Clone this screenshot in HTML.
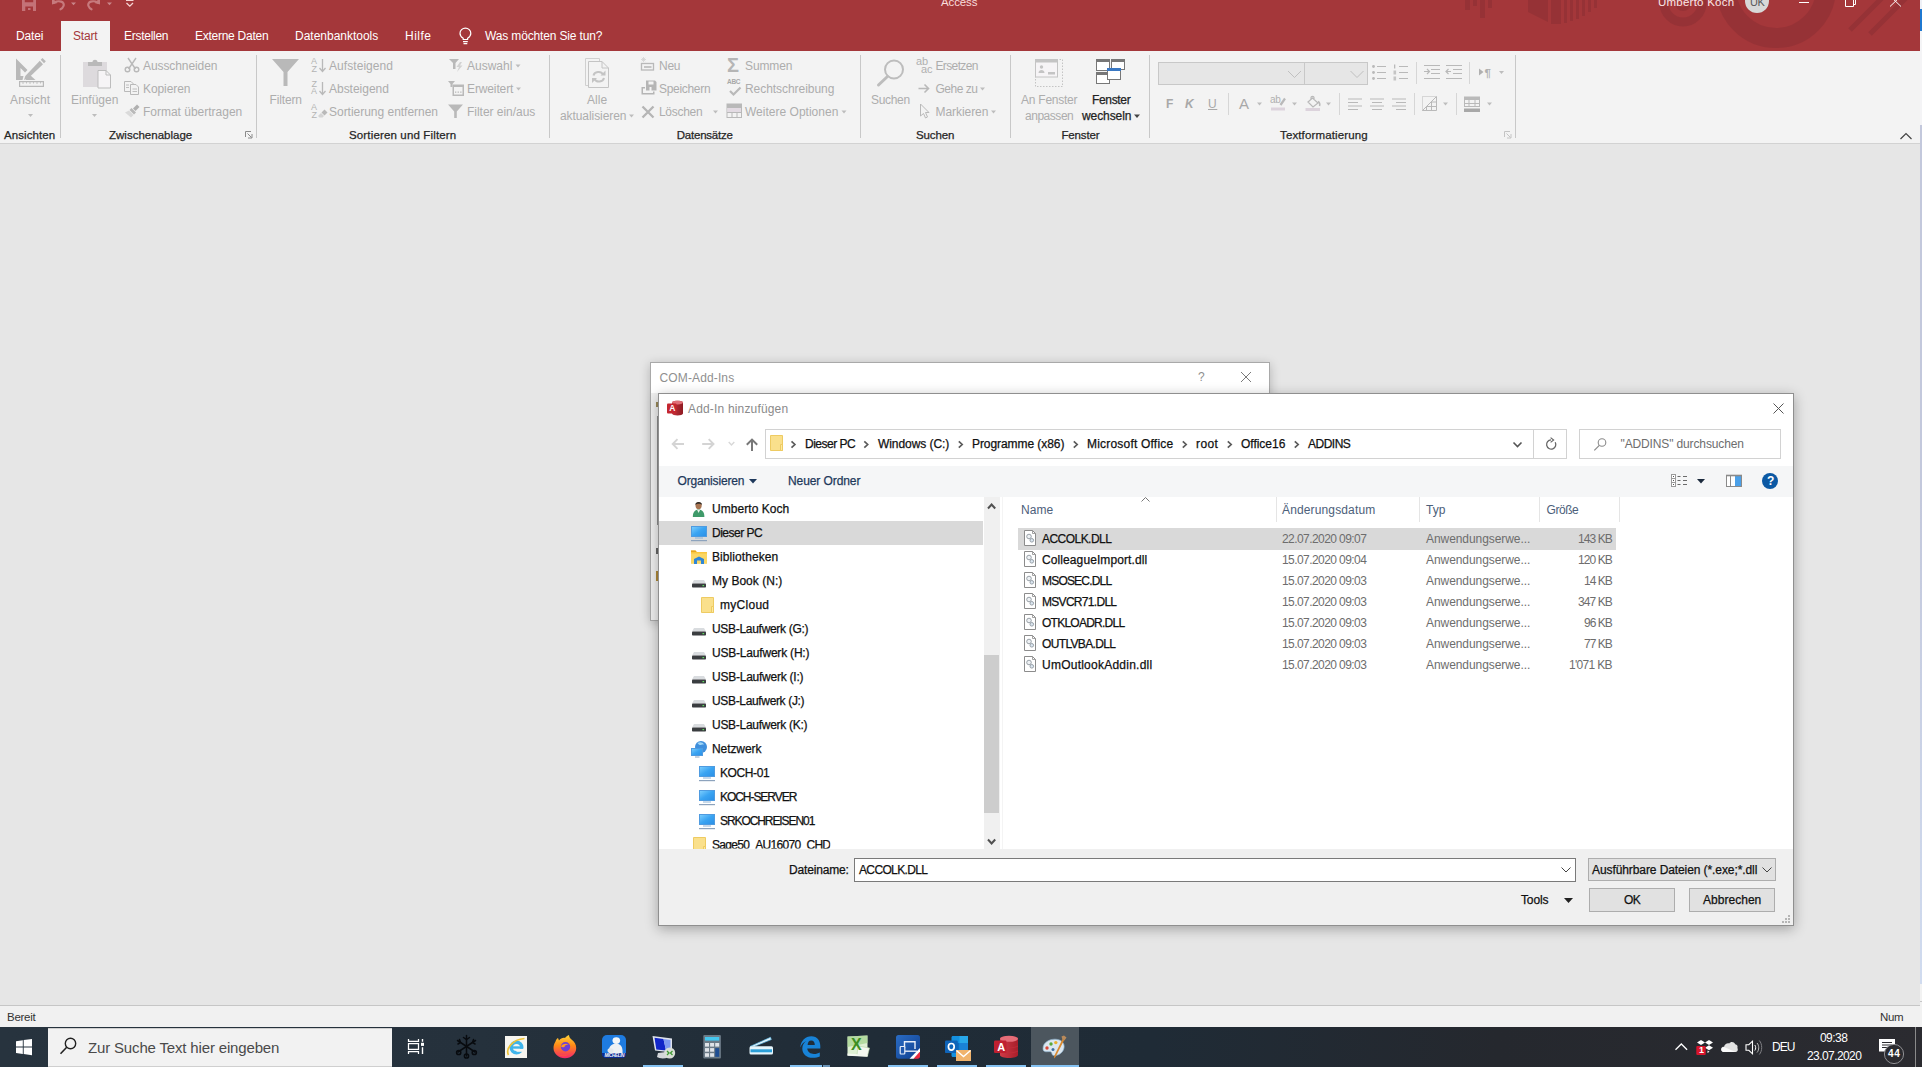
<!DOCTYPE html>
<html lang="de">
<head>
<meta charset="utf-8">
<title>Access</title>
<style>
html,body{margin:0;padding:0;}
body{width:1922px;height:1067px;overflow:hidden;position:relative;background:#e6e6e6;font-family:"Liberation Sans",sans-serif;}
.t{position:absolute;white-space:nowrap;font-family:"Liberation Sans",sans-serif;}
.a{position:absolute;}
.b{-webkit-text-stroke:0.25px currentColor;}
svg{position:absolute;overflow:visible;}
</style>
</head>
<body>

<!-- application frame -->
<div class="a" style="left:0;top:0;width:1920px;height:51px;background:#a4373a;"></div>
<div class="a" style="left:61px;top:21px;width:49px;height:31px;background:#f3f3f3;"></div>
<div class="a" style="left:0;top:51px;width:1920px;height:92px;background:#f3f3f3;"></div>
<div class="a" style="left:0;top:143px;width:1920px;height:1px;background:#d2d2d2;"></div>
<div class="a" style="left:0;top:1005px;width:1920px;height:1px;background:#c6c6c6;"></div>
<div class="a" style="left:0;top:1006px;width:1920px;height:21px;background:#f1f1f1;"></div>
<!-- right strip -->
<div class="a" style="left:1920px;top:0;width:2px;height:1027px;background:linear-gradient(180deg,#c3c8dc 0px,#c3c8dc 500px,#d0dbef 984px,#f2f2f2 984px);"></div>
<div class="a" style="left:1920px;top:0;width:2px;height:9px;background:#eef0f6;"></div>
<div class="a" style="left:1920px;top:9px;width:2px;height:22px;background:#1f78d1;"></div>
<div class="a" style="left:1920px;top:31px;width:2px;height:94px;background:#f4f4f6;"></div>
<div class="a" style="left:1920px;top:1001px;width:2px;height:1px;background:#c6c6c6;"></div>

<!-- ribbon icons -->
<svg style="left:0;top:0" width="1922" height="144" viewBox="0 0 1922 144">
<!-- title decoration -->
<g fill="#8e3035" opacity=".6">
<rect x="1465" y="0" width="5" height="10"/><rect x="1473" y="0" width="4" height="6"/><rect x="1480" y="0" width="5" height="18"/><rect x="1488" y="0" width="4" height="8"/>
<path d="M1528 0H1548V22L1528 12Z"/><rect x="1551" y="0" width="10" height="24"/><rect x="1564" y="0" width="3" height="23"/><rect x="1570" y="0" width="3" height="21"/><rect x="1576" y="0" width="3" height="19"/><rect x="1582" y="0" width="3" height="16"/><rect x="1588" y="0" width="3" height="12"/><rect x="1594" y="0" width="3" height="8"/>
</g>
<g fill="none" stroke="#8e3035" opacity=".6">
<circle cx="1683" cy="3" r="19" stroke-width="9"/><circle cx="1683" cy="3" r="6" stroke-width="4"/>
<circle cx="1776" cy="-12" r="50" stroke-width="20"/>
<path d="M1850 30L1890 -10M1870 34L1912 -8" stroke-width="5"/>
</g>
<!-- QAT -->
<path d="M22 -3H36V11H22ZM25.300 6.500V11H33V6.500ZM24.800 -3V2.200H33.200V-3Z" fill="#c47277" fill-rule="evenodd"/><rect x="28" y="8" width="2.500" height="2" fill="#c47277"/>
<g fill="none" stroke="#c77a7d" stroke-width="2.200" stroke-linecap="round"><path d="M54 2.500C59 0 65 1.500 63.500 6C62.800 8 61.500 8.800 60.500 9.300"/><path d="M98 2.500C93 0 87 1.500 88.500 6C89.200 8 90.500 8.800 91.500 9.300"/></g>
<path d="M52 -2V4.500L57.500 3Z M100 -2V4.500L94.500 3Z" fill="#c77a7d"/>
<path d="M71 2.500H76L73.500 5.200Z M107 2.500H112L109.500 5.200Z" fill="#c98689"/>
<path d="M126 0H133.500" stroke="#f6d3d3" stroke-width="2"/><path d="M126.500 3L129.800 6.200L133 3" fill="none" stroke="#f6d3d3" stroke-width="1.300"/>
<!-- user avatar -->
<circle cx="1757" cy="1" r="12" fill="#d8d8d8"/>
<!-- window controls -->
<g fill="none" stroke="#fff" stroke-width="1"><path d="M1799 2.500H1809"/><path d="M1845.500 -1V6.500H1853.500V-1M1855.500 -1V4.500H1853.500"/><path d="M1890 -4L1901 6.500M1901 -4L1890 6.500"/></g>
<!-- bulb -->
<g fill="none" stroke="#fff" stroke-width="1.200"><path d="M463.200 39.500V38.300C460.700 36.800 460 34.800 460 33.300C460 30.400 462.400 28.200 465.400 28.200C468.400 28.200 470.800 30.400 470.800 33.300C470.800 34.800 470.100 36.800 467.600 38.300V39.500Z"/><path d="M463 41.600H467.800M463.500 43.600H467.300"/></g>
<!-- group separators -->
<g fill="#c8c8c8"><rect x="60" y="55" width="1" height="83"/><rect x="256" y="55" width="1" height="83"/><rect x="549" y="55" width="1" height="83"/><rect x="860" y="55" width="1" height="83"/><rect x="1010" y="55" width="1" height="83"/><rect x="1149" y="55" width="1" height="83"/><rect x="1515" y="55" width="1" height="83"/></g>
<g fill="#d6d6d6"><rect x="1416" y="62" width="1" height="22"/><rect x="1469" y="62" width="1" height="22"/><rect x="1228" y="93" width="1" height="22"/><rect x="1339" y="93" width="1" height="22"/><rect x="1414" y="93" width="1" height="22"/><rect x="1456" y="93" width="1" height="22"/></g>
<!-- dropdown arrows -->
<g fill="#bdbdbd">
<path d="M28 114H33L30.500 117Z"/><path d="M92 114H97L94.500 117Z"/>
<path d="M515.500 64.500H520.500L518 67.500Z"/><path d="M516 87.500H521L518.500 90.500Z"/>
<path d="M629 114.500H634L631.500 117.500Z"/><path d="M713 110.500H718L715.500 113.500Z"/><path d="M841.500 110.500H846.500L844 113.500Z"/>
<path d="M980 87.500H985L982.500 90.500Z"/><path d="M991 110.500H996L993.500 113.500Z"/>
<path d="M1499 71H1504L1501.500 74Z"/><path d="M1257 102.500H1262L1259.500 105.500Z"/><path d="M1292 102.500H1297L1294.500 105.500Z"/><path d="M1326 102.500H1331L1328.500 105.500Z"/><path d="M1443 102.500H1448L1445.500 105.500Z"/><path d="M1487 102.500H1492L1489.500 105.500Z"/>
</g>
<path d="M1134 114.500H1140L1137 118Z" fill="#444"/>
<!-- dialog launchers -->
<g fill="none" stroke="#8a8a8a" stroke-width="1"><path d="M245.500 137V131.500H251M247.500 133.500L251.500 137.500M252 134V138H248"/><path d="M1504.500 137V131.500H1510M1506.500 133.500L1510.500 137.500M1511 134V138H1507" stroke="#c4c4c4"/></g>
<!-- collapse ribbon -->
<path d="M1900.500 139L1906 133.500L1911.500 139" fill="none" stroke="#444" stroke-width="1.200"/>
<!-- Ansicht icon -->
<g fill="#b9b9b9"><path d="M16 58.500L27.500 70L25 72.500L20.500 68V76H23.500L22.500 80H16Z"/><path d="M30 75L35.500 80H25.500Z"/><path d="M42.500 58L45.800 61.300L44 63.200L40.700 59.800Z"/><path d="M39.800 60.800L43 64.200L28 78.500L24 80L25.300 76Z"/><path d="M19 81H44V87H19ZM20.200 82.200V85.800H42.800V82.200Z" fill-rule="evenodd"/><path d="M23 82V84M26.500 82V83.500M30 82V84M33.500 82V83.500M37 82V84M40.500 82V83.500" stroke="#b9b9b9" stroke-width=".8"/></g>
<!-- Einfügen icon -->
<rect x="83" y="62" width="24" height="25" fill="#dddadd"/><path d="M88 66V62H92.500C92.500 59 97.500 59 97.500 62H102V66Z" fill="#b9b9b9"/><path d="M98 70.500H106L110.500 75V88H98Z" fill="#f6f4f6" stroke="#bdbdbd" stroke-width="1"/><path d="M106 70.500V75H110.500" fill="none" stroke="#bdbdbd"/>
<!-- scissors, copy, brush -->
<g fill="none" stroke="#b9b9b9" stroke-width="1.400"><path d="M128 58L135.500 69M136 58L128.500 69"/><circle cx="127.500" cy="69.500" r="2.300"/><circle cx="136.500" cy="69.500" r="2.300"/></g>
<g fill="#f3f3f3" stroke="#b9b9b9" stroke-width="1"><path d="M124.500 81.500H131L133.500 84V91.500H124.500Z"/><path d="M130.500 84.500H136L138.500 87V94.500H130.500Z"/></g><path d="M126 85H129M126 87.500H129M132.500 89H137M132.500 91.500H137" stroke="#b9b9b9" stroke-width=".9"/>
<path d="M137 104.500L139.500 107L135.500 111L133 108.500Z" fill="#b0b0b0"/><path d="M131.500 108L136 112.500L134 114.500L129.500 110Z" fill="#b9b9b9"/><path d="M129 110.500L133.500 115L131 117.500L125 112.500Z" fill="#dadada"/>
<!-- Filter big -->
<path d="M272 59H299L287.500 72V86H283.500V72Z" fill="#b9b9b9"/>
<!-- sort icons -->
<g fill="none" stroke="#b9b9b9" stroke-width="1.300"><path d="M322.500 59V71M319.500 68L322.500 71.500L325.500 68"/><path d="M322.500 82V94M319.500 91L322.500 94.500L325.500 91"/></g>
<g fill="#b9b9b9"><path d="M321.500 112.500L324.500 109.500L327.500 112.500L324.500 115.500Z"/><path d="M318 116L321 113L324 116L322.500 117.500H319.500Z" opacity=".55"/></g>
<!-- small filters -->
<g fill="#b9b9b9"><path d="M449 59H459L455.500 63V69H453V63Z"/><path d="M460 62L456.500 67H459L457 72L462.500 65.500H460L462 62Z" fill="#d2d2d2"/>
<path d="M448 81H455L452.500 84V87H450.500V84Z"/><path d="M452.500 84.500H464V96H452.500ZM454 87V94.500H462.500V87Z" fill-rule="evenodd"/><rect x="455" y="91.500" width="1.300" height="1.300"/><rect x="457.600" y="91.500" width="1.300" height="1.300"/><rect x="460.200" y="91.500" width="1.300" height="1.300"/>
<path d="M448 104.500H463L456.800 111.500V118H454.200V111.500Z"/></g>
<!-- refresh all -->
<g fill="#f3f3f3" stroke="#c4c4c4" stroke-width="1"><path d="M585.500 58.500H599.500V85.500H585.500Z" stroke="#d0d0d0"/><path d="M588.500 61.500H602L608.500 68V87.500H588.500Z"/><path d="M602 61.500V68H608.500" fill="none"/></g>
<g fill="none" stroke="#c4c4c4" stroke-width="2"><path d="M593.500 75.500C594.500 71.500 601 70.500 603 74.500"/><path d="M604 78C603 82 596.500 83 594.500 79"/></g><path d="M600.500 75.500H605.500V70.500Z M597 78H592V83Z" fill="#c4c4c4"/>
<!-- Neu / Speichern / Löschen -->
<g fill="none" stroke="#b9b9b9" stroke-width="1.300"><rect x="641.500" y="63.500" width="12" height="6.500"/><path d="M644 67H651.500" stroke-width="1.600"/></g><path d="M643.500 57V62M641 59.500H646M641.800 57.800L645.200 61.200M645.200 57.800L641.800 61.200" stroke="#d2d2d2" stroke-width=".8"/>
<g fill="#b5b5b5"><path d="M646 80.500H655L656.500 82V90.500H646ZM648.500 81.500V84.500H653.500V81.500ZM649.500 87V90.500H651.500V87Z" fill-rule="evenodd"/><path d="M641.500 87H645V88.500H643V93H653V91.500H654.500V94.500H641.500Z"/></g>
<path d="M642.500 106.500L653.500 117.500M653.500 106.500L642.500 117.500" stroke="#b5b5b5" stroke-width="2.300" fill="none"/>
<!-- Summen / Rechtschreibung / Weitere -->

<path d="M730 91L733.500 94.500L740.500 87.500" fill="none" stroke="#b9b9b9" stroke-width="2.200"/>
<g fill="none" stroke="#b9b9b9" stroke-width="1"><rect x="727" y="104" width="14.500" height="13.500"/><path d="M727 107.500H741.500M727 112.500H741.500M732 107.500V117.500M737 107.500V117.500"/></g><rect x="727" y="104" width="14.500" height="3.500" fill="#b9b9b9"/><rect x="727.500" y="108" width="13.500" height="4" fill="#e3dbe3"/>
<!-- Suchen big -->
<circle cx="894" cy="69.500" r="9" fill="none" stroke="#bdbdbd" stroke-width="2"/><path d="M887.500 76.500L878.500 85" stroke="#bdbdbd" stroke-width="3" stroke-linecap="round"/>
<!-- gehe zu arrow, cursor -->
<path d="M918.500 88.500H928M924.500 84.500L928.500 88.500L924.500 92.500" fill="none" stroke="#b9b9b9" stroke-width="1.600"/>
<path d="M920.500 104V116L923.500 113.500L925.500 118L927.500 117L925.500 112.500H929Z" fill="#f3f3f3" stroke="#b9b9b9" stroke-width="1"/>
<!-- An Fenster anpassen -->
<rect x="1035.500" y="59.500" width="27" height="27" fill="none" stroke="#c4c4c4" stroke-width="1" stroke-dasharray="1.500 1.500"/><rect x="1035.500" y="59.500" width="22" height="17.500" fill="#f6f4f6" stroke="#c4c4c4"/><rect x="1035.500" y="59.500" width="22" height="3" fill="#c4c4c4"/><circle cx="1041.500" cy="67" r="1.700" fill="#c4c4c4"/><path d="M1038.500 73C1038.500 69 1044.500 69 1044.500 73Z" fill="#c4c4c4"/><rect x="1048" y="72" width="7" height="2.500" fill="#c4c4c4"/>
<!-- Fenster wechseln -->
<g fill="#fff" stroke="#777" stroke-width="1"><rect x="1096.500" y="59.500" width="13" height="11"/><rect x="1111.500" y="59.500" width="13" height="10"/><rect x="1096.500" y="72.500" width="13" height="11"/></g><g fill="#777"><rect x="1096" y="59" width="14" height="3"/><rect x="1111" y="59" width="14" height="3"/><rect x="1096" y="72" width="14" height="3"/></g><rect x="1107.500" y="68.500" width="13" height="11" fill="#fff" stroke="#777"/><rect x="1107" y="68" width="14" height="3" fill="#3a78c3"/>
<!-- font combos -->
<rect x="1158.500" y="62.500" width="146" height="22" fill="#e6e6e6" stroke="#c8c8c8"/><rect x="1304.500" y="62.500" width="63" height="22" fill="#e6e6e6" stroke="#c8c8c8"/>
<path d="M1288 71L1294.500 77.500L1301 71M1350.500 71L1357 77.500L1363.500 71" fill="none" stroke="#c0c0c0" stroke-width="1"/>
<!-- list icons -->
<g fill="#b9b9b9"><circle cx="1373.500" cy="66.500" r="1.400"/><circle cx="1373.500" cy="72.500" r="1.400"/><circle cx="1373.500" cy="78.500" r="1.400"/><rect x="1377" y="66" width="9" height="1"/><rect x="1377" y="72" width="9" height="1"/><rect x="1377" y="78" width="9" height="1"/>
<rect x="1399" y="66" width="9" height="1"/><rect x="1399" y="72" width="9" height="1"/><rect x="1399" y="78" width="9" height="1"/><rect x="1394" y="64.500" width="1.300" height="4"/><rect x="1393.500" y="70.500" width="2.600" height="4" opacity=".8"/><rect x="1393.500" y="76.500" width="2.600" height="4" opacity=".8"/>
<rect x="1424" y="65" width="16" height="1"/><rect x="1431" y="69" width="9" height="1"/><rect x="1431" y="73" width="9" height="1"/><rect x="1424" y="78" width="16" height="1"/><rect x="1446" y="65" width="16" height="1"/><rect x="1453" y="69" width="9" height="1"/><rect x="1453" y="73" width="9" height="1"/><rect x="1446" y="78" width="16" height="1"/></g>
<path d="M1424 71.500H1429M1427 69L1429.500 71.500L1427 74M1451 71.500H1446.500M1448.500 69L1446 71.500L1448.500 74" fill="none" stroke="#b9b9b9" stroke-width="1.200"/>
<path d="M1479 68.500L1483.500 72L1479 75.500Z" fill="#b0b0b0"/>
<!-- row 2 -->
<path d="M1271 109H1285" stroke="#dcd3dc" stroke-width="3"/><path d="M1280.500 105L1285 98.500" stroke="#b9b9b9" stroke-width="2.200"/>
<path d="M1305.500 109.500H1320" stroke="#dcd3dc" stroke-width="3"/><path d="M1308 102L1312.500 98L1318 103L1313 107ZM1311 99V97.500C1311 96 1314 96 1314 97.500V99.500" fill="none" stroke="#b9b9b9" stroke-width="1.200"/><path d="M1318 101.500C1320 102.500 1320 105 1319.500 106" fill="none" stroke="#b9b9b9" stroke-width="1.600"/>
<g fill="#b9b9b9"><rect x="1348" y="98.500" width="14" height="1"/><rect x="1348" y="102" width="10" height="1"/><rect x="1348" y="105.500" width="14" height="1"/><rect x="1348" y="109" width="10" height="1"/>
<rect x="1370" y="98.500" width="14" height="1"/><rect x="1372" y="102" width="10" height="1"/><rect x="1370" y="105.500" width="14" height="1"/><rect x="1372" y="109" width="10" height="1"/>
<rect x="1392" y="98.500" width="14" height="1"/><rect x="1396" y="102" width="10" height="1"/><rect x="1392" y="105.500" width="14" height="1"/><rect x="1396" y="109" width="10" height="1"/></g>
<g fill="none" stroke="#b9b9b9" stroke-width="1"><path d="M1422.500 110.500V96.500H1436.500" stroke-dasharray="1 1"/><path d="M1422.500 110.500L1436.500 96.500V110.500ZM1426.500 110.500V106.500H1436.500M1431.500 110.500V102H1436.500"/></g>
<g fill="#b9b9b9"><path d="M1464 96.500H1480V107H1464ZM1465 100V103H1468.500V100ZM1469.500 100V103H1474.500V100ZM1475.500 100V103H1479V100ZM1465 104V106H1468.500V104ZM1469.500 104V106H1474.500V104ZM1475.500 104V106H1479V104Z" fill-rule="evenodd"/><rect x="1464" y="108.500" width="16" height="3.500" fill="#a8a8a8"/></g>
</svg>

<!-- COM-Add-Ins dialog (behind) -->
<div class="a" style="left:650px;top:362px;width:620px;height:259px;background:#f0f0f0;border:1px solid #a9a9a9;box-sizing:border-box;box-shadow:0 2px 10px rgba(0,0,0,.22);"></div>
<div class="a" style="left:651px;top:363px;width:618px;height:30px;background:#ffffff;"></div>
<svg style="left:1241px;top:372px" width="10" height="10" viewBox="0 0 10 10"><path d="M0 0L10 10M10 0L0 10" stroke="#7a7a7a" stroke-width="1" fill="none"/></svg>
<!-- bits of COM dialog visible left of file dialog -->
<div class="a" style="left:657px;top:416px;width:1px;height:109px;background:#8f8f8f;"></div>
<div class="a" style="left:656px;top:402px;width:2px;height:5px;background:#9a8a5a;"></div>
<div class="a" style="left:656px;top:548px;width:2px;height:6px;background:#666;"></div>
<div class="a" style="left:656px;top:571px;width:2px;height:10px;background:#b08a3a;"></div>
<!-- File dialog -->
<div class="a" style="left:658px;top:393px;width:1136px;height:533px;background:#ffffff;border:1px solid #8f8f8f;box-sizing:border-box;box-shadow:0 3px 12px rgba(0,0,0,.30);"></div>
<!-- close X -->
<svg style="left:1773px;top:403px" width="11" height="11" viewBox="0 0 11 11"><path d="M0.5 0.5L10.5 10.5M10.5 0.5L0.5 10.5" stroke="#555" stroke-width="1" fill="none"/></svg>
<!-- address box -->
<div class="a" style="left:765px;top:429px;width:802px;height:30px;border:1px solid #d2d2d2;box-sizing:border-box;background:#fff;"></div>
<div class="a" style="left:1533px;top:430px;width:1px;height:28px;background:#d2d2d2;"></div>
<div class="a" style="left:1579px;top:429px;width:202px;height:30px;border:1px solid #d2d2d2;box-sizing:border-box;background:#fff;"></div>
<!-- toolbar band -->
<div class="a" style="left:659px;top:466px;width:1134px;height:31px;background:#f5f6f7;"></div>
<!-- nav pane selected row -->
<div class="a" style="left:659px;top:521px;width:324px;height:24px;background:#d9d9d9;"></div>
<!-- nav scrollbar -->
<div class="a" style="left:984px;top:497px;width:16px;height:352px;background:#f0f0f0;"></div>
<div class="a" style="left:984px;top:655px;width:15px;height:158px;background:#cdcdcd;"></div>
<svg style="left:986px;top:502px" width="11" height="8" viewBox="0 0 11 8"><path d="M2 6.500L5.600 2.500L9.200 6.500" stroke="#505050" stroke-width="2" fill="none"/></svg>
<svg style="left:986px;top:838px" width="11" height="8" viewBox="0 0 11 8"><path d="M2 1.500L5.600 5.500L9.200 1.500" stroke="#505050" stroke-width="2" fill="none"/></svg>
<div class="a" style="left:1002px;top:497px;width:1px;height:352px;background:#f4f4f4;"></div>
<!-- header column dividers -->
<div class="a" style="left:1276px;top:497px;width:1px;height:25px;background:#e5e5e5;"></div>
<div class="a" style="left:1419px;top:497px;width:1px;height:25px;background:#e5e5e5;"></div>
<div class="a" style="left:1539px;top:497px;width:1px;height:25px;background:#e5e5e5;"></div>
<div class="a" style="left:1619px;top:497px;width:1px;height:25px;background:#e5e5e5;"></div>
<svg style="left:1141px;top:497px" width="9" height="5" viewBox="0 0 9 5"><path d="M0.5 4.5L4.5 0.5L8.5 4.5" stroke="#777" stroke-width="1" fill="none"/></svg>
<!-- selected file row -->
<div class="a" style="left:1018px;top:528px;width:598px;height:22px;background:#d9d9d9;"></div>
<!-- footer -->
<div class="a" style="left:659px;top:849px;width:1134px;height:76px;background:#f0f0f0;"></div>
<div class="a" style="left:854px;top:858px;width:722px;height:24px;border:1px solid #7a7a7a;box-sizing:border-box;background:#fff;"></div>
<svg style="left:1561px;top:867px" width="10" height="6" viewBox="0 0 10 6"><path d="M0.5 0.5L5 5L9.5 0.5" stroke="#444" stroke-width="1" fill="none"/></svg>
<div class="a" style="left:1588px;top:858px;width:188px;height:23px;border:1px solid #adadad;box-sizing:border-box;background:#e1e1e1;"></div>
<svg style="left:1762px;top:867px" width="10" height="6" viewBox="0 0 10 6"><path d="M0.5 0.5L5 5L9.5 0.5" stroke="#444" stroke-width="1" fill="none"/></svg>
<div class="a" style="left:1589px;top:888px;width:86px;height:24px;border:1px solid #adadad;box-sizing:border-box;background:#e1e1e1;"></div>
<div class="a" style="left:1689px;top:888px;width:86px;height:24px;border:1px solid #adadad;box-sizing:border-box;background:#e1e1e1;"></div>
<svg style="left:1564px;top:898px" width="9" height="5" viewBox="0 0 9 5"><path d="M0 0H9L4.5 5Z" fill="#222"/></svg>
<!-- resize grip -->
<svg style="left:1781px;top:914px" width="10" height="10" viewBox="0 0 10 10" fill="#b5b5b5"><rect x="7" y="1" width="2" height="2"/><rect x="4" y="4" width="2" height="2"/><rect x="7" y="4" width="2" height="2"/><rect x="1" y="7" width="2" height="2"/><rect x="4" y="7" width="2" height="2"/><rect x="7" y="7" width="2" height="2"/></svg>

<!-- dialog icons -->
<svg style="left:0;top:0" width="1922" height="1067" viewBox="0 0 1922 1067">
<defs><linearGradient id="scr" x1="0" y1="0" x2="1" y2="1"><stop offset="0" stop-color="#7fd0ff"/><stop offset="0.5" stop-color="#3aa4f2"/><stop offset="1" stop-color="#2b8fe6"/></linearGradient>
<linearGradient id="acc" x1="0" y1="0" x2="1" y2="0"><stop offset="0" stop-color="#c3343d"/><stop offset="1" stop-color="#8e1a22"/></linearGradient>
<clipPath id="navclip"><rect x="659" y="497" width="324" height="352"/></clipPath></defs>
<g><path d="M672 402.5C672 400 683 400 683 402.5V413.5C683 416 672 416 672 413.5Z" fill="url(#acc)"/><ellipse cx="677.5" cy="402.6" rx="5.5" ry="1.8" fill="#e07078"/><rect x="667" y="403.5" width="9.5" height="10" rx="1" fill="#c4262f"/></g>
<g fill="none" stroke="#d4d4d4" stroke-width="1.9"><path d="M684 444H673M677.5 439.2L672.7 444L677.5 448.8"/><path d="M702.2 444H713.2M708.7 439.2L713.5 444L708.7 448.8"/><path d="M728.7 442L731.5 445L734.300 442" stroke="#d8d8d8" stroke-width="1.4"/></g>
<path d="M752 440V451M746.8 444.8L752 439.6L757.2 444.8" fill="none" stroke="#787878" stroke-width="2"/>
<path d="M770.5 435.5H782.5V450.5H770.5Z" fill="#fae08c" stroke="#eecb62" stroke-width="1"/><path d="M780.5 450.5V444.5H782.5V450.5Z" fill="#fde99f" stroke="#eecb62" stroke-width="1"/>
<path d="M791.5 441.3L794.9 444.5L791.5 447.7" fill="none" stroke="#5a5a5a" stroke-width="1.7"/>
<path d="M864.3 441.3L867.7 444.5L864.3 447.7" fill="none" stroke="#5a5a5a" stroke-width="1.7"/>
<path d="M958.8 441.3L962.2 444.5L958.8 447.7" fill="none" stroke="#5a5a5a" stroke-width="1.7"/>
<path d="M1073.8 441.3L1077.2 444.5L1073.8 447.7" fill="none" stroke="#5a5a5a" stroke-width="1.7"/>
<path d="M1182.8 441.3L1186.2 444.5L1182.8 447.7" fill="none" stroke="#5a5a5a" stroke-width="1.7"/>
<path d="M1227.8 441.3L1231.2 444.5L1227.8 447.7" fill="none" stroke="#5a5a5a" stroke-width="1.7"/>
<path d="M1294.8 441.3L1298.2 444.5L1294.8 447.7" fill="none" stroke="#5a5a5a" stroke-width="1.7"/>
<path d="M1513.5 442.5L1517.5 446.5L1521.5 442.5" fill="none" stroke="#555" stroke-width="1.6"/>
<path d="M1555.2 442.2A4.6 4.6 0 1 1 1551 439.900" fill="none" stroke="#666" stroke-width="1.3"/><path d="M1550.6 437.6L1553.6 440L1550.6 442.400" fill="none" stroke="#666" stroke-width="1.2"/>
<circle cx="1602" cy="442.5" r="3.8" fill="none" stroke="#8a8a8a" stroke-width="1.1"/><path d="M1599.3 445.3L1594.3 450.3" stroke="#8a8a8a" stroke-width="1.2"/>
<path d="M749 479H757L753 483.5Z" fill="#1e395b"/>
<g fill="none" stroke="#9a9a9a" stroke-width="1"><rect x="1671.5" y="474.5" width="4" height="12" fill="#fff"/><path d="M1671.5 478.5H1675.5M1671.5 482.5H1675.5"/></g><g fill="#555"><rect x="1673" y="476" width="1" height="1"/><rect x="1673" y="480" width="1" height="1"/><rect x="1673" y="484" width="1" height="1"/></g><path d="M1677.5 476.5H1680.5M1683 476.5H1687M1677.5 480.5H1680.5M1683 480.5H1687M1677.5 484.5H1680.5M1683 484.5H1687" stroke="#6a6a6a" stroke-width="1" fill="none"/>
<path d="M1697 479H1705L1701 483.5Z" fill="#1b2a3d"/>
<rect x="1726.5" y="475.5" width="15" height="11" fill="#fff" stroke="#8a8a8a" stroke-width="1"/><rect x="1735" y="476" width="6" height="10" fill="#4ba0e8"/><path d="M1730.5 476V486" stroke="#8a8a8a" stroke-width="1"/><path d="M1726 475.5H1742" stroke="#8a8a8a" stroke-width="1.6"/>
<circle cx="1770" cy="481" r="8" fill="#0c59a4"/>
<path d="M692.8 517C692.8 511.5 695.5 509.5 698.6 509.5C701.8 509.5 704.400 511.5 704.400 517Z" fill="#3f9a6a"/><path d="M697 509.8L698.6 513L700.2 509.8Z" fill="#e8f3ea"/><ellipse cx="698.6" cy="505.6" rx="3.1" ry="3.6" fill="#a87552"/><path d="M695.3 504.8C695.3 501 702 501 702 504.8C700.5 503.3 697 503.3 695.3 504.8Z" fill="#2e2a26"/>
<rect x="691.5" y="526.5" width="15" height="10" fill="url(#scr)" stroke="#4f9be0" stroke-width="1"/><rect x="695" y="537.5" width="8" height="1" fill="#8fb3d6"/><rect x="691" y="540" width="16" height="1.2" fill="#8da3bd"/>
<path d="M691 550.5H695.5L697 552H707V563.5H691Z" fill="#f9c740"/><path d="M691 550.5H695.5L696.5 552H691Z" fill="#e5a51f"/><path d="M691 553.5H707V563.5H691Z" fill="#fbd764"/><path d="M694 564V559L699 556.5L704 559V564H701V560.5H697V564Z" fill="#2f86d6"/>
<path d="M694 580H704L706 583.5H692Z" fill="#d9dcdf"/><rect x="692" y="583.5" width="14" height="4" rx=".8" fill="#3a3d40"/><rect x="702.5" y="585" width="1.6" height="1.2" fill="#5fe05f"/>
<path d="M694 628H704L706 631.5H692Z" fill="#d9dcdf"/><rect x="692" y="631.5" width="14" height="4" rx=".8" fill="#3a3d40"/><rect x="702.5" y="633" width="1.6" height="1.2" fill="#5fe05f"/>
<path d="M694 652H704L706 655.5H692Z" fill="#d9dcdf"/><rect x="692" y="655.5" width="14" height="4" rx=".8" fill="#3a3d40"/><rect x="702.5" y="657" width="1.6" height="1.2" fill="#5fe05f"/>
<path d="M694 676H704L706 679.5H692Z" fill="#d9dcdf"/><rect x="692" y="679.5" width="14" height="4" rx=".8" fill="#3a3d40"/><rect x="702.5" y="681" width="1.6" height="1.2" fill="#5fe05f"/>
<path d="M694 700H704L706 703.5H692Z" fill="#d9dcdf"/><rect x="692" y="703.5" width="14" height="4" rx=".8" fill="#3a3d40"/><rect x="702.5" y="705" width="1.6" height="1.2" fill="#5fe05f"/>
<path d="M694 724H704L706 727.5H692Z" fill="#d9dcdf"/><rect x="692" y="727.5" width="14" height="4" rx=".8" fill="#3a3d40"/><rect x="702.5" y="729" width="1.6" height="1.2" fill="#5fe05f"/>
<path d="M701.5 597.5H713.5V612.5H701.5Z" fill="#fae08c" stroke="#eecb62" stroke-width="1"/><path d="M711.5 612.5V606.5H713.5V612.5Z" fill="#fde99f" stroke="#eecb62" stroke-width="1"/>
<circle cx="701" cy="747" r="6" fill="#3f8fdc"/><path d="M697.5 743C699.5 741.5 703 742 704 744.5C702 744 701 745.5 699.5 745C698.5 744.5 698 743.5 697.5 743Z" fill="#9fd6f7"/><rect x="691.5" y="748.5" width="11" height="7" fill="url(#scr)" stroke="#4f9be0"/><rect x="695" y="756.5" width="4.5" height="1" fill="#8da3bd"/>
<rect x="699.5" y="766.5" width="15" height="10" fill="url(#scr)" stroke="#4f9be0" stroke-width="1"/><rect x="703" y="777.5" width="8" height="1" fill="#8fb3d6"/><rect x="699" y="780" width="16" height="1.2" fill="#8da3bd"/>
<rect x="699.5" y="790.5" width="15" height="10" fill="url(#scr)" stroke="#4f9be0" stroke-width="1"/><rect x="703" y="801.5" width="8" height="1" fill="#8fb3d6"/><rect x="699" y="804" width="16" height="1.2" fill="#8da3bd"/>
<rect x="699.5" y="814.5" width="15" height="10" fill="url(#scr)" stroke="#4f9be0" stroke-width="1"/><rect x="703" y="825.5" width="8" height="1" fill="#8fb3d6"/><rect x="699" y="828" width="16" height="1.2" fill="#8da3bd"/>
<g clip-path="url(#navclip)"><path d="M693.5 837.5H705.5V852.5H693.5Z" fill="#fae08c" stroke="#eecb62" stroke-width="1"/><path d="M703.5 852.5V846.5H705.5V852.5Z" fill="#fde99f" stroke="#eecb62" stroke-width="1"/></g>
<path d="M1024.5 530.5H1032.5L1035.5 533.5V545.5H1024.5Z" fill="#fff" stroke="#8c8c8c" stroke-width="1"/><path d="M1032.5 530.5V533.5H1035.5" fill="none" stroke="#8c8c8c" stroke-width=".8"/><circle cx="1029" cy="536.5" r="2.3" fill="#eef1f4" stroke="#8f979f" stroke-width=".9"/><circle cx="1031.8" cy="540.3" r="1.8" fill="#dbe6f0" stroke="#8f979f" stroke-width=".9"/>
<path d="M1024.5 551.5H1032.5L1035.5 554.5V566.5H1024.5Z" fill="#fff" stroke="#8c8c8c" stroke-width="1"/><path d="M1032.5 551.5V554.5H1035.5" fill="none" stroke="#8c8c8c" stroke-width=".8"/><circle cx="1029" cy="557.5" r="2.3" fill="#eef1f4" stroke="#8f979f" stroke-width=".9"/><circle cx="1031.8" cy="561.3" r="1.8" fill="#dbe6f0" stroke="#8f979f" stroke-width=".9"/>
<path d="M1024.5 572.5H1032.5L1035.5 575.5V587.5H1024.5Z" fill="#fff" stroke="#8c8c8c" stroke-width="1"/><path d="M1032.5 572.5V575.5H1035.5" fill="none" stroke="#8c8c8c" stroke-width=".8"/><circle cx="1029" cy="578.5" r="2.3" fill="#eef1f4" stroke="#8f979f" stroke-width=".9"/><circle cx="1031.8" cy="582.3" r="1.8" fill="#dbe6f0" stroke="#8f979f" stroke-width=".9"/>
<path d="M1024.5 593.5H1032.5L1035.5 596.5V608.5H1024.5Z" fill="#fff" stroke="#8c8c8c" stroke-width="1"/><path d="M1032.5 593.5V596.5H1035.5" fill="none" stroke="#8c8c8c" stroke-width=".8"/><circle cx="1029" cy="599.5" r="2.3" fill="#eef1f4" stroke="#8f979f" stroke-width=".9"/><circle cx="1031.8" cy="603.3" r="1.8" fill="#dbe6f0" stroke="#8f979f" stroke-width=".9"/>
<path d="M1024.5 614.5H1032.5L1035.5 617.5V629.5H1024.5Z" fill="#fff" stroke="#8c8c8c" stroke-width="1"/><path d="M1032.5 614.5V617.5H1035.5" fill="none" stroke="#8c8c8c" stroke-width=".8"/><circle cx="1029" cy="620.5" r="2.3" fill="#eef1f4" stroke="#8f979f" stroke-width=".9"/><circle cx="1031.8" cy="624.3" r="1.8" fill="#dbe6f0" stroke="#8f979f" stroke-width=".9"/>
<path d="M1024.5 635.5H1032.5L1035.5 638.5V650.5H1024.5Z" fill="#fff" stroke="#8c8c8c" stroke-width="1"/><path d="M1032.5 635.5V638.5H1035.5" fill="none" stroke="#8c8c8c" stroke-width=".8"/><circle cx="1029" cy="641.5" r="2.3" fill="#eef1f4" stroke="#8f979f" stroke-width=".9"/><circle cx="1031.8" cy="645.3" r="1.8" fill="#dbe6f0" stroke="#8f979f" stroke-width=".9"/>
<path d="M1024.5 656.5H1032.5L1035.5 659.5V671.5H1024.5Z" fill="#fff" stroke="#8c8c8c" stroke-width="1"/><path d="M1032.5 656.5V659.5H1035.5" fill="none" stroke="#8c8c8c" stroke-width=".8"/><circle cx="1029" cy="662.5" r="2.3" fill="#eef1f4" stroke="#8f979f" stroke-width=".9"/><circle cx="1031.8" cy="666.3" r="1.8" fill="#dbe6f0" stroke="#8f979f" stroke-width=".9"/>
</svg>
<!-- taskbar -->
<div class="a" style="left:0;top:1027px;width:1922px;height:40px;background:linear-gradient(90deg,#27333e 0%,#25313c 25%,#202c37 45%,#1f2b36 60%,#25282e 78%,#2b2b30 100%);"></div>
<div class="a" style="left:48px;top:1028px;width:344px;height:39px;background:#f2f2f2;border-top:1px solid #cfcfcf;border-bottom:1px solid #cfcfcf;box-sizing:border-box;"></div>
<div class="a" style="left:1031px;top:1027px;width:48px;height:40px;background:#4c565e;"></div>
<!-- running indicators -->
<div class="a" style="left:643px;top:1065px;width:40px;height:2px;background:#85c2f2;"></div>
<div class="a" style="left:790px;top:1065px;width:32px;height:2px;background:#85c2f2;"></div>
<div class="a" style="left:823px;top:1065px;width:7px;height:2px;background:#6a94b8;"></div>
<div class="a" style="left:888px;top:1065px;width:40px;height:2px;background:#85c2f2;"></div>
<div class="a" style="left:937px;top:1065px;width:40px;height:2px;background:#85c2f2;"></div>
<div class="a" style="left:986px;top:1065px;width:40px;height:2px;background:#85c2f2;"></div>
<div class="a" style="left:1031px;top:1065px;width:48px;height:2px;background:#85c2f2;"></div>
<div class="a" style="left:1915px;top:1027px;width:1px;height:40px;background:#8a8a8a;"></div>
<svg style="left:0;top:1027px" width="1922" height="40" viewBox="0 1027 1922 40">
<defs>
<linearGradient id="ffx" x1="0" y1="0" x2="0" y2="1"><stop offset="0" stop-color="#ffd43a"/><stop offset=".45" stop-color="#ff8a16"/><stop offset="1" stop-color="#f4256d"/></linearGradient>
<linearGradient id="bapp" x1="0" y1="0" x2="1" y2="1"><stop offset="0" stop-color="#2a6cc4"/><stop offset="1" stop-color="#0f3f8f"/></linearGradient>
<linearGradient id="accb" x1="0" y1="0" x2="1" y2="0"><stop offset="0" stop-color="#cf3a46"/><stop offset="1" stop-color="#a81e2a"/></linearGradient>
</defs>
<!-- windows logo -->
<g fill="#fff"><path d="M16 1041.2L22.8 1040.2V1046.6H16Z"/><path d="M23.7 1040.1L32 1038.9V1046.6H23.7Z"/><path d="M16 1047.5H22.8V1053.9L16 1052.9Z"/><path d="M23.7 1047.5H32V1055.2L23.7 1054Z"/></g>
<!-- search icon -->
<circle cx="70.5" cy="1043.5" r="5.2" fill="none" stroke="#222" stroke-width="1.4"/><path d="M66.7 1047.300L60.5 1053.8" stroke="#222" stroke-width="1.6"/>
<!-- task view -->
<g fill="none" stroke="#fff" stroke-width="1.25"><rect x="408.5" y="1043.6" width="10" height="5.8"/><path d="M408.5 1039V1041.4H418.5V1039M408.5 1054.1V1051.7H418.5V1054.1"/><path d="M422.5 1039V1041.8M422.5 1047.2V1054.1" stroke-width="1.4"/></g><rect x="421" y="1042.8" width="3" height="3.1" fill="#fff"/>
<!-- keys logo (black) -->
<g stroke="#080b0f" stroke-width="1.5" fill="none" stroke-linecap="round"><path d="M466.5 1035.500V1056M457.5 1040.500L475 1052M475.5 1040.500L458 1052"/><circle cx="458.7" cy="1052.5" r="2.1"/><circle cx="466.5" cy="1056" r="2.1"/><circle cx="474.3" cy="1052.5" r="2.1"/><path d="M463.5 1037.500L466.5 1039.500L469.5 1037.500M458 1044L460.5 1042.500L459.5 1039.500M475 1044L472.5 1042.500L473.5 1039.5"/></g>
<!-- IE on white -->
<rect x="505" y="1036" width="22" height="22" fill="#f6f5f0"/>
<g fill="none"><circle cx="516.5" cy="1047.5" r="5.3" stroke="#3fb4ea" stroke-width="3.4"/><rect x="516.5" y="1048.8" width="8" height="3" fill="#f6f5f0"/><path d="M511.5 1047.500H523" stroke="#3fb4ea" stroke-width="2.4"/><path d="M508.5 1055C505.5 1049 512 1039.5 524.5 1038.5" stroke="#eec337" stroke-width="1.7"/></g>
<!-- Firefox -->
<path d="M555.5 1041.500C556 1039.5 557 1038.5 558 1038L559 1040.500C560.5 1038.5 563 1037.5 565 1038C566 1036.5 567.5 1035.5 569 1035C569 1037 570 1038 571.5 1039.500C574.5 1041.5 576.2 1044.5 576.2 1048C576.2 1054 571.2 1058.2 565 1058.200C558.8 1058.2 553.5 1054 553.5 1048C553.5 1045.5 554.3 1043.2 555.5 1041.500Z" fill="url(#ffx)"/>
<circle cx="565.5" cy="1046.8" r="4.7" fill="#6b3fd6"/><path d="M561 1046.500C562 1044 566 1043 568.5 1044.500C566 1044.5 564.5 1045.5 564.5 1047C563 1047.5 561.5 1047.3 561 1046.500Z" fill="#ff9a1f"/><path d="M555 1049C557 1055 563 1056.5 568 1054.500C565 1058 557 1057 555 1049Z" fill="#ff5a36" opacity=".7"/>
<!-- Michelin -->
<rect x="602" y="1035" width="24" height="23" rx="5" fill="#1e7be0"/><path d="M602 1053H626V1054C626 1056.5 624.5 1058 622 1058H606C603.5 1058 602 1056.5 602 1054Z" fill="#0b2b93"/>
<ellipse cx="616.3" cy="1040.6" rx="3.8" ry="3.4" fill="#f4f6f8"/><path d="M609 1053C608 1047 611.5 1043.5 616 1043.500C620.5 1043.5 623 1047 622.5 1053Z" fill="#eef1f4"/><ellipse cx="610.5" cy="1050.5" rx="3" ry="2.3" fill="#e4e8ec"/>
<!-- Remote desktop -->
<path d="M652.5 1036L672 1038.500V1052.500L655 1050.500Z" fill="#dfe3ec"/><path d="M654.5 1037.800L663.5 1039L666 1050.500L656.3 1049.500Z" fill="#1226c8"/><path d="M663.5 1039L670.5 1040V1051L666 1050.500Z" fill="#7f9af0"/><path d="M658 1053L666 1052L668 1057.500C664 1059 659 1058.5 657 1057Z" fill="#d4d6da"/><circle cx="669.7" cy="1053" r="5.5" fill="#d9ded6"/><path d="M667 1051L669 1053L667 1055M672.5 1051L670.5 1053L672.5 1055" fill="none" stroke="#3f9a34" stroke-width="1.3"/>
<!-- Calculator -->
<rect x="703.3" y="1035" width="17.6" height="23.5" rx="1" fill="#6b7a86"/><rect x="705" y="1037" width="14.2" height="3.6" fill="#45c6ee"/><g fill="#dfe3e8"><rect x="705" y="1043" width="4" height="3.6"/><rect x="710.1" y="1043" width="4" height="3.6"/><rect x="715.2" y="1043" width="4" height="3.6"/><rect x="705" y="1048.1" width="4" height="3.6"/><rect x="710.1" y="1048.1" width="4" height="3.6"/><rect x="705" y="1053.2" width="4" height="3.6"/><rect x="710.1" y="1053.2" width="4" height="3.6"/></g><rect x="715.2" y="1048.1" width="4" height="8.7" fill="#1f4e92"/>
<!-- Scanner -->
<path d="M750 1046.500L770.5 1037.300L771.3 1039.600L754 1046.500Z" fill="#e8f6fc" stroke="#5cb8e6" stroke-width=".7"/><rect x="749.5" y="1046.2" width="23.5" height="8.3" rx="1.5" fill="#e6f5fc"/><rect x="750.5" y="1049.3" width="21.5" height="3" fill="#2b9fd8"/>
<!-- Edge -->
<path d="M800.3 1047.500C800.8 1040.5 805.5 1036.2 811.3 1036.200C817.5 1036.2 820.3 1041 820.3 1046V1048.600H807.300C807.5 1052.2 810.5 1054 814 1054C816.3 1054 818.3 1053.4 819.8 1052.500V1056.400C818 1057.3 815.5 1057.8 812.8 1057.800C806.3 1057.8 802.3 1053.6 802.3 1048.400C802.3 1045.2 804 1042.5 806.5 1041C803.8 1041.8 801.5 1044.3 800.3 1047.500ZM807.6 1045H814.800C814.8 1042.5 813.7 1040.6 811.1 1040.600C808.9 1040.6 807.8 1042.7 807.6 1045Z" fill="#1883d7"/>
<!-- Excel -->
<path d="M847.5 1036.500L867.5 1035.500V1056.500L847.5 1055.500Z" fill="#dff0d4"/><path d="M847.5 1036.500L867.5 1035.500V1043L847.5 1047Z" fill="#9fd08a" opacity=".7"/><path d="M858 1046L869.5 1048L867.5 1056L857 1055Z" fill="#f4f8f0" stroke="#b5d3a5" stroke-width=".6"/><path d="M847.5 1053.500L867.5 1055V1056.800L847.5 1055.800Z" fill="#f4f8f0"/>
<!-- blue device app -->
<rect x="896" y="1035" width="24" height="23.7" rx="2.5" fill="url(#bapp)"/><path d="M913 1058.700L920 1051V1056.200C920 1057.7 919 1058.7 917.5 1058.700Z" fill="#e8283c"/><path d="M909.5 1058.700L920 1048V1051.500L913.5 1058.700Z" fill="#fff"/><g fill="none" stroke="#e8eef8" stroke-width="1.4"><path d="M904.5 1048V1041.700H915V1049"/><path d="M903 1051.200H917"/></g><rect x="900.2" y="1046.5" width="4.6" height="7.5" rx=".8" fill="#1f58ae" stroke="#e8eef8" stroke-width="1.2"/>
<!-- Outlook -->
<path d="M951.5 1037.500C951.5 1036.6 952.1 1036 953 1036H966.500C967.4 1036 968 1036.6 968 1037.500V1055.500C968 1056.4 967.4 1057 966.5 1057H953C952.1 1057 951.5 1056.4 951.5 1055.500Z" fill="#1490df"/><rect x="959.5" y="1036" width="8.5" height="7" fill="#28a8ea"/><rect x="951.5" y="1043" width="8" height="7" fill="#0f6cbd"/><rect x="959.5" y="1043" width="8.5" height="7" fill="#1a82d7"/><rect x="945" y="1040.5" width="12.8" height="12.6" rx="1.2" fill="#0f64b9"/><ellipse cx="951.3" cy="1046.8" rx="2.9" ry="3.3" fill="none" stroke="#fff" stroke-width="1.7"/><rect x="956" y="1050" width="15" height="11" fill="#f0b36c"/><path d="M956.5 1050.500L963.5 1056.500L970.5 1050.5" fill="none" stroke="#fff" stroke-width="1.4"/>
<!-- Access -->
<path d="M1000 1038.800C1000 1035 1018 1035 1018 1038.800V1055C1018 1059 1000 1059 1000 1055Z" fill="url(#accb)"/><ellipse cx="1009" cy="1038.8" rx="9" ry="3" fill="#e56d78"/><path d="M1000 1046C1004 1048.5 1014 1048.5 1018 1046M1000 1051C1004 1053.5 1014 1053.5 1018 1051" fill="none" stroke="#c12d3a" stroke-width=".8"/><rect x="994" y="1040.5" width="12.5" height="12.5" rx="1.2" fill="#bf2030"/>
<!-- Paint -->
<path d="M1043 1048.500C1043 1042.5 1049 1039.2 1055 1039.200C1061.5 1039.2 1065 1043.5 1064 1048C1063 1053 1058 1056 1053.5 1055.500C1051.5 1055.3 1052.5 1052.5 1050.5 1051.800C1048 1051 1043 1053.5 1043 1048.500Z" fill="#dbe7f0" stroke="#8fb3cf" stroke-width=".7"/><circle cx="1047" cy="1048" r="1.7" fill="#d94a3a"/><circle cx="1051" cy="1044" r="1.7" fill="#58a83a"/><circle cx="1055.8" cy="1042.6" r="1.7" fill="#e8b030"/><circle cx="1053" cy="1049.5" r="1.5" fill="#3f6f9f"/><path d="M1062.5 1039L1064.2 1040L1055.5 1057L1054 1058.500L1054.2 1056Z" fill="#d98a30"/><path d="M1061.5 1036.500L1064 1035.500L1066.5 1037.500L1064.5 1040.500L1062.3 1039.300Z" fill="#b98a5a"/>
<!-- tray -->
<path d="M1675.5 1049.800L1681.3 1044L1687.1 1049.8" fill="none" stroke="#fff" stroke-width="1.3"/>
<g fill="#fff"><path d="M1701 1040L1705 1042.500L1701 1045L1697 1042.500Z"/><path d="M1709 1040L1713 1042.500L1709 1045L1705 1042.500Z"/><path d="M1709 1045.200L1713 1047.700L1709 1050.200L1705 1047.700Z"/><path d="M1707.5 1050.500L1709.5 1051.800L1707.5 1053Z"/></g>
<rect x="1696.3" y="1046" width="9.4" height="9" rx="1" fill="#d9142c"/>
<path d="M1724.3 1052C1721.8 1052 1720.8 1050.2 1721.2 1048.700C1721.6 1047.3 1723 1046.7 1724 1046.900C1724.6 1044.3 1727 1042.9 1729.2 1043.500C1730.5 1041.4 1734 1041.3 1735.2 1044.300C1737.2 1044.5 1738 1046.3 1737.4 1048C1738.2 1049 1737.8 1052 1735.8 1052Z" fill="#e2e2e2"/><path d="M1724 1046.900L1735.5 1052H1724.300C1721 1052 1720 1047.5 1724 1046.900Z" fill="#fafafa"/>
<path d="M1746 1044.700H1748.800L1752.5 1041.200V1053.800L1748.8 1050.300H1746Z" fill="none" stroke="#fff" stroke-width="1.1"/><path d="M1754.8 1045C1756 1046.5 1756 1049 1754.8 1050.5" fill="none" stroke="#fff" stroke-width="1"/><path d="M1757 1043C1759.3 1045.5 1759.3 1050 1757 1052.5" fill="none" stroke="#bdbdbd" stroke-width="1"/><path d="M1759.3 1040.500C1762.5 1044 1762.5 1051 1759.3 1054.5" fill="none" stroke="#808084" stroke-width="1"/>
<!-- notifications -->
<path d="M1879 1039H1895V1051.500H1879Z" fill="#fff"/><g stroke="#2b2b2f" stroke-width="1"><path d="M1882 1042.500H1892M1882 1045H1892M1882 1047.500H1892"/></g>
<circle cx="1894" cy="1054" r="9.6" fill="#2b2b2f" stroke="#8f8f93" stroke-width="1"/>
</svg>

<!-- texts -->
<span class="t" style="left:941px;top:-4.6px;font-size:11.5px;line-height:14px;color:#fadcdc;letter-spacing:-0.13px;">Access</span>
<span class="t" style="left:1658px;top:-4.6px;font-size:11.5px;line-height:14px;color:#fbe6e6;letter-spacing:0.23px;">Umberto Koch</span>
<span class="t" style="left:1750px;top:-5.0px;font-size:11px;line-height:14px;color:#5a5a5a;letter-spacing:-0.49px;">UK</span>
<span class="t" style="left:16px;top:28.5px;font-size:12px;line-height:15px;color:#ffffff;letter-spacing:-0.14px;">Datei</span>
<span class="t" style="left:73px;top:28.5px;font-size:12px;line-height:15px;color:#a4373a;letter-spacing:-0.21px;">Start</span>
<span class="t" style="left:124px;top:28.5px;font-size:12px;line-height:15px;color:#ffffff;letter-spacing:-0.27px;">Erstellen</span>
<span class="t" style="left:195px;top:28.5px;font-size:12px;line-height:15px;color:#ffffff;letter-spacing:-0.26px;">Externe Daten</span>
<span class="t" style="left:295px;top:28.5px;font-size:12px;line-height:15px;color:#ffffff;letter-spacing:-0.01px;">Datenbanktools</span>
<span class="t" style="left:405px;top:28.5px;font-size:12px;line-height:15px;color:#ffffff;letter-spacing:0.46px;">Hilfe</span>
<span class="t" style="left:485px;top:28.5px;font-size:12px;line-height:15px;color:#ffffff;letter-spacing:-0.15px;">Was möchten Sie tun?</span>
<span class="t" style="left:10px;top:92.5px;font-size:12px;line-height:15px;color:#adadad;letter-spacing:0.13px;">Ansicht</span>
<span class="t" style="left:71px;top:92.5px;font-size:12px;line-height:15px;color:#adadad;letter-spacing:-0.01px;">Einfügen</span>
<span class="t" style="left:143px;top:58.5px;font-size:12px;line-height:15px;color:#adadad;letter-spacing:-0.09px;">Ausschneiden</span>
<span class="t" style="left:143px;top:81.5px;font-size:12px;line-height:15px;color:#adadad;letter-spacing:-0.09px;">Kopieren</span>
<span class="t" style="left:143px;top:104.5px;font-size:12px;line-height:15px;color:#adadad;letter-spacing:-0.01px;">Format übertragen</span>
<span class="t" style="left:269.5px;top:92.5px;font-size:12px;line-height:15px;color:#adadad;letter-spacing:-0.15px;">Filtern</span>
<span class="t" style="left:329px;top:58.5px;font-size:12px;line-height:15px;color:#adadad;letter-spacing:0.06px;">Aufsteigend</span>
<span class="t" style="left:329px;top:81.5px;font-size:12px;line-height:15px;color:#adadad;letter-spacing:-0.02px;">Absteigend</span>
<span class="t" style="left:329px;top:104.5px;font-size:12px;line-height:15px;color:#adadad;letter-spacing:-0.02px;">Sortierung entfernen</span>
<span class="t" style="left:467px;top:58.5px;font-size:12px;line-height:15px;color:#adadad;letter-spacing:-0.01px;">Auswahl</span>
<span class="t" style="left:467px;top:81.5px;font-size:12px;line-height:15px;color:#adadad;letter-spacing:-0.12px;">Erweitert</span>
<span class="t" style="left:467px;top:104.5px;font-size:12px;line-height:15px;color:#adadad;letter-spacing:-0.03px;">Filter ein/aus</span>
<span class="t" style="left:587px;top:92.5px;font-size:12px;line-height:15px;color:#adadad;letter-spacing:0.07px;">Alle</span>
<span class="t" style="left:560px;top:108.5px;font-size:12px;line-height:15px;color:#adadad;letter-spacing:-0.08px;">aktualisieren</span>
<span class="t" style="left:659px;top:58.5px;font-size:12px;line-height:15px;color:#adadad;letter-spacing:-0.24px;">Neu</span>
<span class="t" style="left:659px;top:81.5px;font-size:12px;line-height:15px;color:#adadad;letter-spacing:-0.31px;">Speichern</span>
<span class="t" style="left:659px;top:104.5px;font-size:12px;line-height:15px;color:#adadad;letter-spacing:-0.30px;">Löschen</span>
<span class="t" style="left:745px;top:58.5px;font-size:12px;line-height:15px;color:#adadad;letter-spacing:-0.12px;">Summen</span>
<span class="t" style="left:745px;top:81.5px;font-size:12px;line-height:15px;color:#adadad;letter-spacing:-0.05px;">Rechtschreibung</span>
<span class="t" style="left:745px;top:104.5px;font-size:12px;line-height:15px;color:#adadad;letter-spacing:0.01px;">Weitere Optionen</span>
<span class="t" style="left:871px;top:92.5px;font-size:12px;line-height:15px;color:#adadad;letter-spacing:-0.32px;">Suchen</span>
<span class="t" style="left:935.5px;top:58.5px;font-size:12px;line-height:15px;color:#adadad;letter-spacing:-0.63px;">Ersetzen</span>
<span class="t" style="left:935.5px;top:81.5px;font-size:12px;line-height:15px;color:#adadad;letter-spacing:-0.51px;">Gehe zu</span>
<span class="t" style="left:935.5px;top:104.5px;font-size:12px;line-height:15px;color:#adadad;letter-spacing:-0.06px;">Markieren</span>
<span class="t" style="left:1021px;top:92.5px;font-size:12px;line-height:15px;color:#adadad;letter-spacing:-0.24px;">An Fenster</span>
<span class="t" style="left:1025px;top:108.5px;font-size:12px;line-height:15px;color:#adadad;letter-spacing:-0.47px;">anpassen</span>
<span class="t b" style="left:1092px;top:92.5px;font-size:12px;line-height:15px;color:#222;letter-spacing:-0.34px;">Fenster</span>
<span class="t b" style="left:1082px;top:108.5px;font-size:12px;line-height:15px;color:#222;letter-spacing:-0.09px;">wechseln</span>
<span class="t" style="left:1166px;top:96.5px;font-size:12px;line-height:15px;color:#a8a8a8;font-weight:700;letter-spacing:-1.04px;">F</span>
<span class="t" style="left:1185px;top:96.5px;font-size:12px;line-height:15px;color:#a8a8a8;font-weight:700;letter-spacing:0.63px;font-style:italic;">K</span>
<span class="t" style="left:1208px;top:96.5px;font-size:12px;line-height:15px;color:#a8a8a8;letter-spacing:0.63px;text-decoration:underline;">U</span>
<span class="t" style="left:1239px;top:93.5px;font-size:15px;line-height:19px;color:#a8a8a8;letter-spacing:0.28px;">A</span>
<span class="t b" style="left:4px;top:128.0px;font-size:11.5px;line-height:14px;color:#262626;letter-spacing:0.09px;">Ansichten</span>
<span class="t b" style="left:109px;top:128.0px;font-size:11.5px;line-height:14px;color:#262626;letter-spacing:0.01px;">Zwischenablage</span>
<span class="t b" style="left:349px;top:128.0px;font-size:11.5px;line-height:14px;color:#262626;letter-spacing:0.15px;">Sortieren und Filtern</span>
<span class="t b" style="left:676.7px;top:128.0px;font-size:11.5px;line-height:14px;color:#262626;letter-spacing:-0.21px;">Datensätze</span>
<span class="t b" style="left:916px;top:128.0px;font-size:11.5px;line-height:14px;color:#262626;letter-spacing:-0.12px;">Suchen</span>
<span class="t b" style="left:1061.5px;top:128.0px;font-size:11.5px;line-height:14px;color:#262626;letter-spacing:-0.17px;">Fenster</span>
<span class="t b" style="left:1280px;top:128.0px;font-size:11.5px;line-height:14px;color:#262626;letter-spacing:0.13px;">Textformatierung</span>
<span class="t" style="left:7px;top:1010.0px;font-size:11.5px;line-height:14px;color:#333;letter-spacing:-0.29px;">Bereit</span>
<span class="t" style="left:1880px;top:1010.0px;font-size:11.5px;line-height:14px;color:#333;letter-spacing:-0.33px;">Num</span>
<span class="t" style="left:659.5px;top:370.5px;font-size:12px;line-height:15px;color:#8f8f8f;letter-spacing:0.13px;">COM-Add-Ins</span>
<span class="t" style="left:1198px;top:369.5px;font-size:12px;line-height:15px;color:#8f8f8f;letter-spacing:-1.39px;">?</span>
<span class="t" style="left:688px;top:401.5px;font-size:12px;line-height:15px;color:#8a8a8a;letter-spacing:0.17px;">Add-In hinzufügen</span>
<span class="t b" style="left:805px;top:436.5px;font-size:12px;line-height:15px;color:#111;letter-spacing:-0.49px;">Dieser PC</span>
<span class="t b" style="left:878px;top:436.5px;font-size:12px;line-height:15px;color:#111;letter-spacing:-0.06px;">Windows (C:)</span>
<span class="t b" style="left:972px;top:436.5px;font-size:12px;line-height:15px;color:#111;letter-spacing:-0.07px;">Programme (x86)</span>
<span class="t b" style="left:1087px;top:436.5px;font-size:12px;line-height:15px;color:#111;letter-spacing:0.20px;">Microsoft Office</span>
<span class="t b" style="left:1196px;top:436.5px;font-size:12px;line-height:15px;color:#111;letter-spacing:0.40px;">root</span>
<span class="t b" style="left:1241px;top:436.5px;font-size:12px;line-height:15px;color:#111;letter-spacing:-0.02px;">Office16</span>
<span class="t b" style="left:1308px;top:436.5px;font-size:12px;line-height:15px;color:#111;letter-spacing:-0.51px;">ADDINS</span>
<span class="t" style="left:1620.5px;top:436.5px;font-size:12px;line-height:15px;color:#6d6d6d;letter-spacing:-0.13px;">"ADDINS" durchsuchen</span>
<span class="t b" style="left:677.5px;top:473.5px;font-size:12px;line-height:15px;color:#1e395b;letter-spacing:-0.16px;">Organisieren</span>
<span class="t b" style="left:788px;top:473.5px;font-size:12px;line-height:15px;color:#1e395b;letter-spacing:-0.09px;">Neuer Ordner</span>
<span class="t b" style="left:712px;top:501.5px;font-size:12px;line-height:15px;color:#111;letter-spacing:0.05px;">Umberto Koch</span>
<span class="t b" style="left:712px;top:525.5px;font-size:12px;line-height:15px;color:#111;letter-spacing:-0.49px;">Dieser PC</span>
<span class="t b" style="left:712px;top:549.5px;font-size:12px;line-height:15px;color:#111;letter-spacing:0.08px;">Bibliotheken</span>
<span class="t b" style="left:712px;top:573.5px;font-size:12px;line-height:15px;color:#111;letter-spacing:0.02px;">My Book (N:)</span>
<span class="t b" style="left:720px;top:597.5px;font-size:12px;line-height:15px;color:#111;letter-spacing:0.28px;">myCloud</span>
<span class="t b" style="left:712px;top:621.5px;font-size:12px;line-height:15px;color:#111;letter-spacing:-0.30px;">USB-Laufwerk (G:)</span>
<span class="t b" style="left:712px;top:645.5px;font-size:12px;line-height:15px;color:#111;letter-spacing:-0.20px;">USB-Laufwerk (H:)</span>
<span class="t b" style="left:712px;top:669.5px;font-size:12px;line-height:15px;color:#111;letter-spacing:-0.24px;">USB-Laufwerk (I:)</span>
<span class="t b" style="left:712px;top:693.5px;font-size:12px;line-height:15px;color:#111;letter-spacing:-0.34px;">USB-Laufwerk (J:)</span>
<span class="t b" style="left:712px;top:717.5px;font-size:12px;line-height:15px;color:#111;letter-spacing:-0.28px;">USB-Laufwerk (K:)</span>
<span class="t b" style="left:712px;top:741.5px;font-size:12px;line-height:15px;color:#111;letter-spacing:-0.09px;">Netzwerk</span>
<span class="t b" style="left:720px;top:765.5px;font-size:12px;line-height:15px;color:#111;letter-spacing:-0.39px;">KOCH-01</span>
<span class="t b" style="left:720px;top:789.5px;font-size:12px;line-height:15px;color:#111;letter-spacing:-1.05px;">KOCH-SERVER</span>
<span class="t b" style="left:720px;top:813.5px;font-size:12px;line-height:15px;color:#111;letter-spacing:-1.08px;">SRKOCHREISEN01</span>
<span class="t" style="left:1021px;top:502.5px;font-size:12px;line-height:15px;color:#4c607a;letter-spacing:0.07px;">Name</span>
<span class="t" style="left:1282px;top:502.5px;font-size:12px;line-height:15px;color:#4c607a;letter-spacing:0.14px;">Änderungsdatum</span>
<span class="t" style="left:1426px;top:502.5px;font-size:12px;line-height:15px;color:#4c607a;letter-spacing:-0.01px;">Typ</span>
<span class="t" style="left:1546.5px;top:502.5px;font-size:12px;line-height:15px;color:#4c607a;letter-spacing:-0.44px;">Größe</span>
<span class="t b" style="left:1042px;top:531.5px;font-size:12px;line-height:15px;color:#111;letter-spacing:-0.54px;">ACCOLK.DLL</span>
<span class="t" style="left:1282px;top:531.5px;font-size:12px;line-height:15px;color:#6d6d6d;letter-spacing:-0.57px;">22.07.2020 09:07</span>
<span class="t" style="left:1426px;top:531.5px;font-size:12px;line-height:15px;color:#6d6d6d;letter-spacing:-0.07px;">Anwendungserwe...</span>
<span class="t" style="left:1578px;top:531.5px;font-size:12px;line-height:15px;color:#6d6d6d;letter-spacing:-0.93px;">143 KB</span>
<span class="t b" style="left:1042px;top:552.5px;font-size:12px;line-height:15px;color:#111;letter-spacing:0.10px;">ColleagueImport.dll</span>
<span class="t" style="left:1282px;top:552.5px;font-size:12px;line-height:15px;color:#6d6d6d;letter-spacing:-0.57px;">15.07.2020 09:04</span>
<span class="t" style="left:1426px;top:552.5px;font-size:12px;line-height:15px;color:#6d6d6d;letter-spacing:-0.07px;">Anwendungserwe...</span>
<span class="t" style="left:1578px;top:552.5px;font-size:12px;line-height:15px;color:#6d6d6d;letter-spacing:-0.93px;">120 KB</span>
<span class="t b" style="left:1042px;top:573.5px;font-size:12px;line-height:15px;color:#111;letter-spacing:-0.81px;">MSOSEC.DLL</span>
<span class="t" style="left:1282px;top:573.5px;font-size:12px;line-height:15px;color:#6d6d6d;letter-spacing:-0.57px;">15.07.2020 09:03</span>
<span class="t" style="left:1426px;top:573.5px;font-size:12px;line-height:15px;color:#6d6d6d;letter-spacing:-0.07px;">Anwendungserwe...</span>
<span class="t" style="left:1584px;top:573.5px;font-size:12px;line-height:15px;color:#6d6d6d;letter-spacing:-0.98px;">14 KB</span>
<span class="t b" style="left:1042px;top:594.5px;font-size:12px;line-height:15px;color:#111;letter-spacing:-0.70px;">MSVCR71.DLL</span>
<span class="t" style="left:1282px;top:594.5px;font-size:12px;line-height:15px;color:#6d6d6d;letter-spacing:-0.57px;">15.07.2020 09:03</span>
<span class="t" style="left:1426px;top:594.5px;font-size:12px;line-height:15px;color:#6d6d6d;letter-spacing:-0.07px;">Anwendungserwe...</span>
<span class="t" style="left:1578px;top:594.5px;font-size:12px;line-height:15px;color:#6d6d6d;letter-spacing:-0.93px;">347 KB</span>
<span class="t b" style="left:1042px;top:615.5px;font-size:12px;line-height:15px;color:#111;letter-spacing:-0.75px;">OTKLOADR.DLL</span>
<span class="t" style="left:1282px;top:615.5px;font-size:12px;line-height:15px;color:#6d6d6d;letter-spacing:-0.57px;">15.07.2020 09:03</span>
<span class="t" style="left:1426px;top:615.5px;font-size:12px;line-height:15px;color:#6d6d6d;letter-spacing:-0.07px;">Anwendungserwe...</span>
<span class="t" style="left:1584px;top:615.5px;font-size:12px;line-height:15px;color:#6d6d6d;letter-spacing:-0.98px;">96 KB</span>
<span class="t b" style="left:1042px;top:636.5px;font-size:12px;line-height:15px;color:#111;letter-spacing:-0.65px;">OUTLVBA.DLL</span>
<span class="t" style="left:1282px;top:636.5px;font-size:12px;line-height:15px;color:#6d6d6d;letter-spacing:-0.57px;">15.07.2020 09:03</span>
<span class="t" style="left:1426px;top:636.5px;font-size:12px;line-height:15px;color:#6d6d6d;letter-spacing:-0.07px;">Anwendungserwe...</span>
<span class="t" style="left:1584px;top:636.5px;font-size:12px;line-height:15px;color:#6d6d6d;letter-spacing:-0.98px;">77 KB</span>
<span class="t b" style="left:1042px;top:657.5px;font-size:12px;line-height:15px;color:#111;letter-spacing:0.24px;">UmOutlookAddin.dll</span>
<span class="t" style="left:1282px;top:657.5px;font-size:12px;line-height:15px;color:#6d6d6d;letter-spacing:-0.57px;">15.07.2020 09:03</span>
<span class="t" style="left:1426px;top:657.5px;font-size:12px;line-height:15px;color:#6d6d6d;letter-spacing:-0.07px;">Anwendungserwe...</span>
<span class="t" style="left:1569px;top:657.5px;font-size:12px;line-height:15px;color:#6d6d6d;letter-spacing:-0.69px;">1'071 KB</span>
<span class="t b" style="left:789px;top:862.5px;font-size:12px;line-height:15px;color:#111;letter-spacing:-0.16px;">Dateiname:</span>
<span class="t b" style="left:859px;top:862.5px;font-size:12px;line-height:15px;color:#111;letter-spacing:-0.64px;">ACCOLK.DLL</span>
<span class="t b" style="left:1592px;top:862.5px;font-size:12px;line-height:15px;color:#111;letter-spacing:-0.09px;">Ausführbare Dateien (*.exe;*.dll</span>
<span class="t b" style="left:1521px;top:892.5px;font-size:12px;line-height:15px;color:#111;letter-spacing:-0.14px;">Tools</span>
<span class="t b" style="left:1624px;top:892.5px;font-size:12px;line-height:15px;color:#111;letter-spacing:-0.52px;">OK</span>
<span class="t b" style="left:1703px;top:892.5px;font-size:12px;line-height:15px;color:#111;letter-spacing:0.03px;">Abbrechen</span>
<span class="t" style="left:88px;top:1037.5px;font-size:15px;line-height:19px;color:#4a4a4a;letter-spacing:-0.16px;">Zur Suche Text hier eingeben</span>
<span class="t" style="left:1772px;top:1039.5px;font-size:12px;line-height:15px;color:#fff;letter-spacing:-1.01px;">DEU</span>
<span class="t" style="left:1820px;top:1030.5px;font-size:12px;line-height:15px;color:#fff;letter-spacing:-0.55px;">09:38</span>
<span class="t" style="left:1807px;top:1048.5px;font-size:12px;line-height:15px;color:#fff;letter-spacing:-0.58px;">23.07.2020</span>
<span class="t" style="left:1888px;top:1048.0px;font-size:10px;line-height:12px;color:#fff;font-weight:700;letter-spacing:0.59px;">44</span>
<span class="t" style="left:1699px;top:1045.0px;font-size:9px;line-height:11px;color:#fff;font-weight:700;letter-spacing:-0.22px;">1</span>
<span class="t b" style="left:712px;top:837.5px;font-size:12px;line-height:15px;color:#111;letter-spacing:-0.69px;clip-path:inset(0 0 4px 0);">Sage50_AU16070_CHD</span>
<span class="t" style="left:1767px;top:473.5px;font-size:12px;line-height:15px;color:#fff;font-weight:700;letter-spacing:-1.04px;">?</span>
<span class="t" style="left:311px;top:55.5px;font-size:9px;line-height:11px;color:#b4b4b4;letter-spacing:0.28px;">A</span>
<span class="t" style="left:311.5px;top:63.5px;font-size:9px;line-height:11px;color:#b4b4b4;letter-spacing:-0.20px;">Z</span>
<span class="t" style="left:311.5px;top:78.5px;font-size:9px;line-height:11px;color:#b4b4b4;letter-spacing:-0.20px;">Z</span>
<span class="t" style="left:311px;top:86.0px;font-size:9px;line-height:11px;color:#b4b4b4;letter-spacing:0.28px;">A</span>
<span class="t" style="left:311px;top:101.5px;font-size:9px;line-height:11px;color:#b4b4b4;letter-spacing:0.28px;">A</span>
<span class="t" style="left:311.5px;top:109.5px;font-size:9px;line-height:11px;color:#b4b4b4;letter-spacing:-0.20px;">Z</span>
<span class="t" style="left:727px;top:78.0px;font-size:6.5px;line-height:8px;color:#a8a8a8;font-weight:700;letter-spacing:-0.26px;">ABC</span>
<span class="t" style="left:916px;top:54.0px;font-size:11px;line-height:14px;color:#b0b0b0;letter-spacing:-0.22px;">ab</span>
<span class="t" style="left:921px;top:61.5px;font-size:11px;line-height:14px;color:#b0b0b0;letter-spacing:-0.16px;">ac</span>
<span class="t" style="left:1270px;top:93.5px;font-size:10px;line-height:12px;color:#b0b0b0;letter-spacing:-0.41px;">ab</span>
<span class="t" style="left:669.2px;top:403.1px;font-size:8.5px;line-height:11px;color:#fff;font-weight:700;letter-spacing:-0.64px;">A</span>
<span class="t" style="left:997.2px;top:1039.8px;font-size:11px;line-height:14px;color:#fff;font-weight:700;letter-spacing:-1.05px;">A</span>
<span class="t" style="left:851px;top:1035.2px;font-size:16px;line-height:20px;color:#3c8f22;font-weight:700;letter-spacing:0.63px;">X</span>
<span class="t" style="left:727px;top:52.8px;font-size:20px;line-height:25px;color:#b5b5b5;font-weight:700;letter-spacing:2.28px;">Σ</span>
<span class="t" style="left:1484.5px;top:65.8px;font-size:11.5px;line-height:14px;color:#b0b0b0;font-weight:700;letter-spacing:0.89px;">¶</span>
<span class="t" style="left:604.5px;top:1052.6px;font-size:4.5px;line-height:6px;color:#fff;font-weight:700;letter-spacing:-0.24px;font-style:italic;">MICHELIN</span>
</body>
</html>
